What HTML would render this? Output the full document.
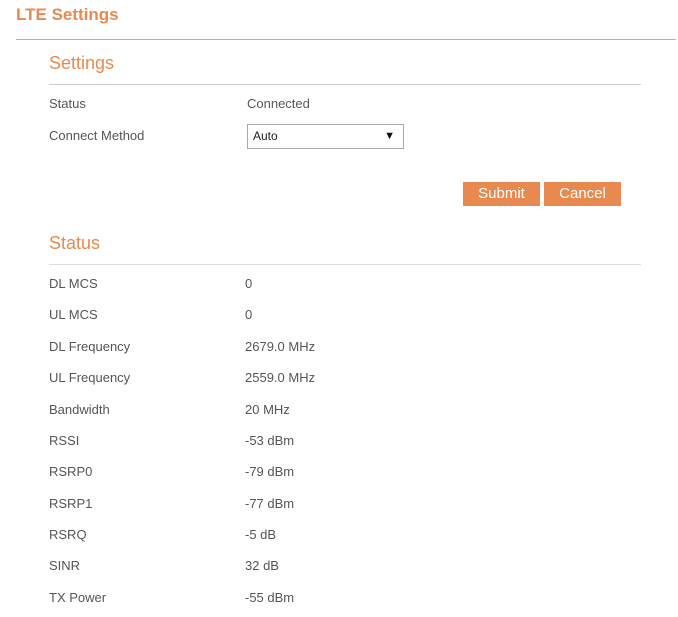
<!DOCTYPE html>
<html><head><meta charset="utf-8"><style>
body{margin:0;width:678px;height:617px;background:#fff;font-family:"Liberation Sans",Arial,sans-serif;color:#555;position:relative;overflow:hidden}
.a{position:absolute;white-space:nowrap}
.t{font-size:13px;line-height:16px}
h1{position:absolute;left:16px;top:5px;margin:0;font-size:17px;font-weight:bold;color:#e8894f}
h2{position:absolute;left:49px;margin:0;font-size:18px;font-weight:normal;color:#e8894f}
.ln{position:absolute;height:1px}
.btn{position:absolute;top:182px;width:77px;height:24px;background:#e8894f;color:#fff;font-size:15px;line-height:23px;text-align:center}
</style></head><body>
<h1>LTE Settings</h1>
<div class="ln" style="left:16px;top:39px;width:660px;background:#e8a070"></div>
<h2 style="top:53px">Settings</h2>
<div class="ln" style="left:49px;top:84px;width:592px;background:#ccc"></div>
<div class="a t" style="left:49px;top:96px">Status</div>
<div class="a t" style="left:247px;top:96px">Connected</div>
<div class="a t" style="left:49px;top:128px">Connect Method</div>
<div class="a" style="left:247px;top:124px;width:155px;height:23px;border:1px solid #aaa;font-size:12px;color:#222;line-height:23px"><span style="margin-left:5px">Auto</span><span style="position:absolute;right:8px;font-size:11px;color:#111">▼</span></div>
<div class="btn" style="left:463px">Submit</div>
<div class="btn" style="left:544px">Cancel</div>
<h2 style="top:233px">Status</h2>
<div class="ln" style="left:49px;top:264px;width:592px;background:#ddd"></div>
<div class="a t" style="left:49px;top:276px">DL MCS</div><div class="a t" style="left:245px;top:276px">0</div>
<div class="a t" style="left:49px;top:307px">UL MCS</div><div class="a t" style="left:245px;top:307px">0</div>
<div class="a t" style="left:49px;top:339px">DL Frequency</div><div class="a t" style="left:245px;top:339px">2679.0 MHz</div>
<div class="a t" style="left:49px;top:370px">UL Frequency</div><div class="a t" style="left:245px;top:370px">2559.0 MHz</div>
<div class="a t" style="left:49px;top:402px">Bandwidth</div><div class="a t" style="left:245px;top:402px">20 MHz</div>
<div class="a t" style="left:49px;top:433px">RSSI</div><div class="a t" style="left:245px;top:433px">-53 dBm</div>
<div class="a t" style="left:49px;top:464px">RSRP0</div><div class="a t" style="left:245px;top:464px">-79 dBm</div>
<div class="a t" style="left:49px;top:496px">RSRP1</div><div class="a t" style="left:245px;top:496px">-77 dBm</div>
<div class="a t" style="left:49px;top:527px">RSRQ</div><div class="a t" style="left:245px;top:527px">-5 dB</div>
<div class="a t" style="left:49px;top:558px">SINR</div><div class="a t" style="left:245px;top:558px">32 dB</div>
<div class="a t" style="left:49px;top:590px">TX Power</div><div class="a t" style="left:245px;top:590px">-55 dBm</div>
</body></html>
